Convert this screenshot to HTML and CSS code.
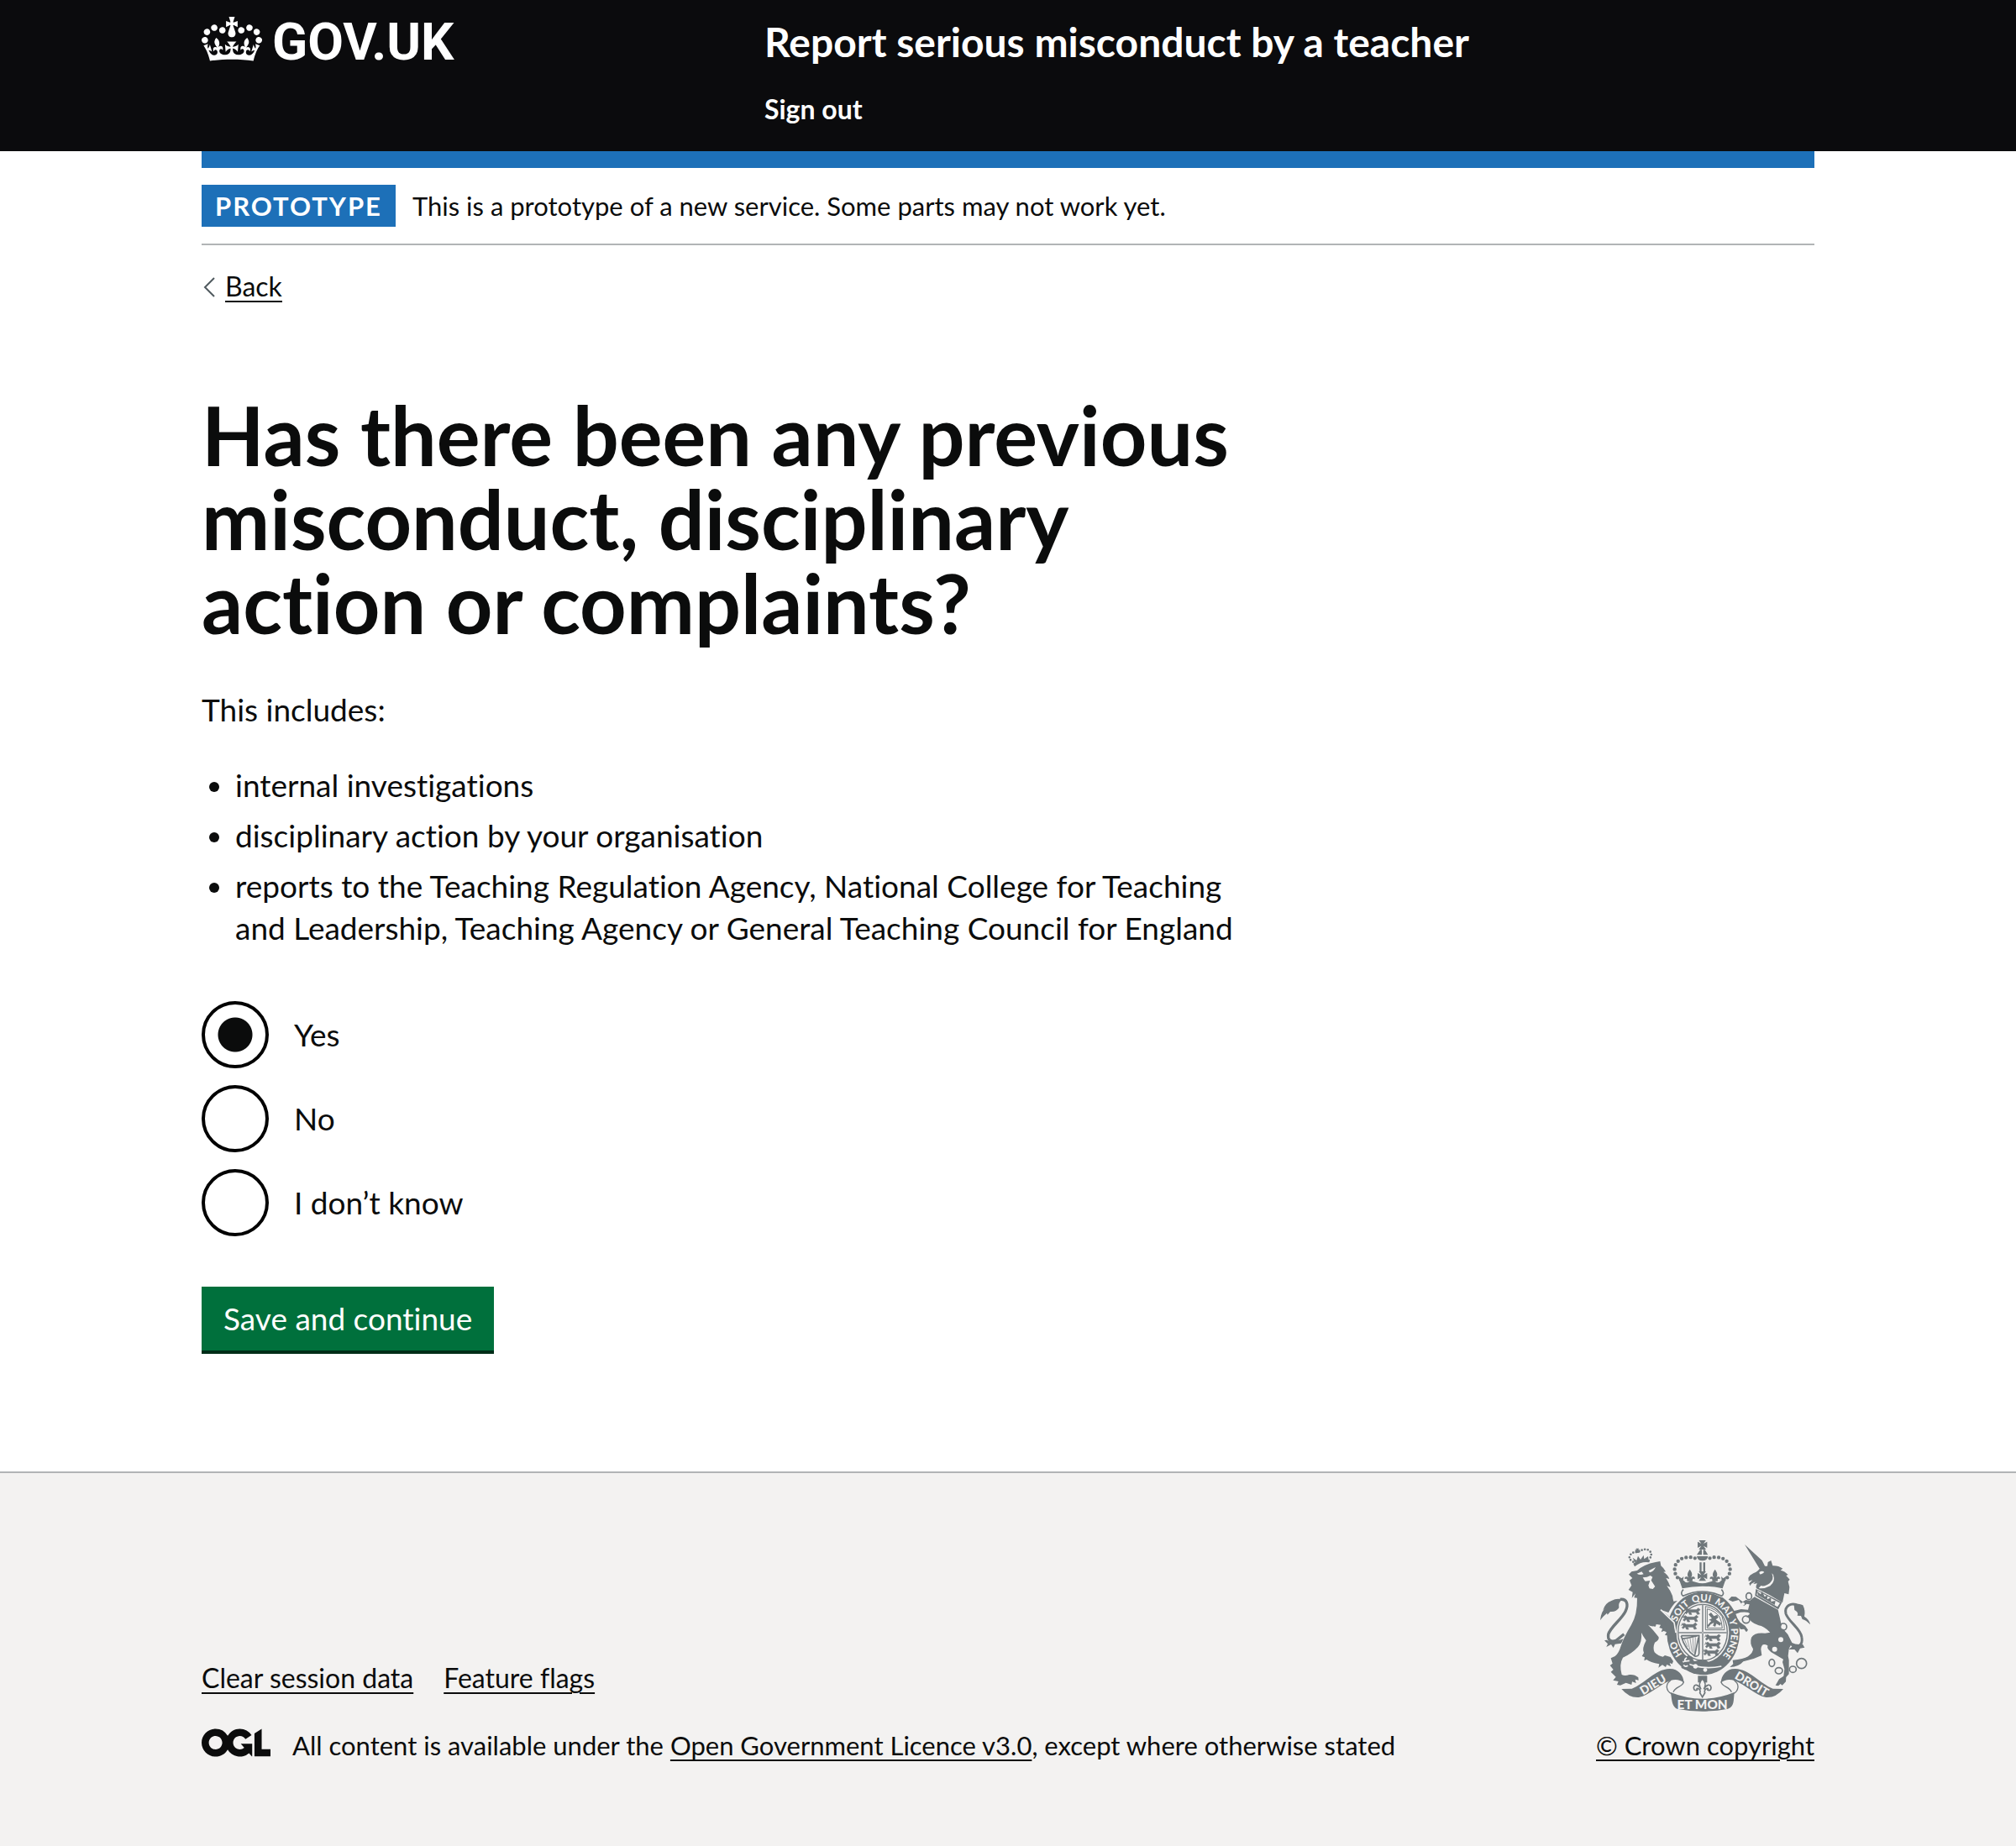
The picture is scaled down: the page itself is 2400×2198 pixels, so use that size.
FILE: index.html
```html
<!DOCTYPE html>
<html lang="en">
<head>
<meta charset="utf-8">
<meta name="viewport" content="width=device-width, initial-scale=1">
<title>Has there been any previous misconduct, disciplinary action or complaints?</title>
<link rel="stylesheet" href="styles.css">
</head>
<body>
<header class="header">
  <div class="container header-grid">
    <a class="logo" href="#">
      <svg viewBox="0 0 132 97" width="72" height="53" aria-hidden="true" fill="currentColor"><path fill-rule="evenodd" d="M25 30.2c3.5 1.5 7.7-.2 9.1-3.7 1.5-3.6-.2-7.8-3.9-9.2-3.6-1.4-7.6.3-9.1 3.9-1.4 3.5.3 7.5 3.9 9zM9 39.5c3.6 1.5 7.8-.2 9.2-3.7 1.5-3.6-.2-7.8-3.9-9.1-3.6-1.5-7.6.2-9.1 3.8-1.4 3.5.3 7.5 3.8 9zM4.4 57.2c3.5 1.5 7.7-.2 9.1-3.8 1.5-3.6-.2-7.7-3.9-9.1-3.5-1.5-7.6.3-9.1 3.8-1.4 3.5.3 7.6 3.9 9.1zm38.3-21.4c3.5 1.5 7.7-.2 9.1-3.8 1.5-3.6-.2-7.7-3.9-9.1-3.6-1.5-7.6.3-9.1 3.8-1.3 3.6.4 7.7 3.9 9.1zm64.4-5.6c-3.6 1.5-7.8-.2-9.1-3.7-1.5-3.6.2-7.8 3.8-9.2 3.6-1.4 7.7.3 9.2 3.9 1.3 3.5-.4 7.5-3.9 9zm15.9 9.3c-3.6 1.5-7.7-.2-9.1-3.7-1.5-3.6.2-7.8 3.7-9.1 3.6-1.5 7.7.2 9.2 3.8 1.5 3.5-.3 7.5-3.8 9zm4.7 17.7c-3.6 1.5-7.8-.2-9.2-3.8-1.5-3.6.2-7.7 3.9-9.1 3.6-1.5 7.7.3 9.2 3.8 1.3 3.5-.4 7.6-3.9 9.1zM89.3 35.8c-3.6 1.5-7.8-.2-9.2-3.8-1.4-3.6.2-7.7 3.9-9.1 3.6-1.5 7.7.3 9.2 3.8 1.4 3.6-.3 7.7-3.9 9.1zM69.7 17.7l8.9 4.7V9.3l-8.9 2.8c-.2-.3-.5-.6-.9-.9L72.4 0H59.6l3.5 11.2c-.3.3-.6.5-.9.9l-8.8-2.8v13.1l8.8-4.7c.3.3.6.7.9.9l-5 15.4v.1c-.2.8-.4 1.6-.4 2.4 0 4.1 3.1 7.5 7 8.1h.2c.3 0 .7.1 1 .1.4 0 .7 0 1-.1h.2c4-.6 7.1-4.1 7.1-8.1 0-.8-.1-1.7-.4-2.4V34l-5.1-15.4c.4-.2.7-.6 1-.9zM66 92.8c16.9 0 32.8 1.1 47.1 3.2 4-16.9 8.9-26.7 14-33.5l-9.6-3.4c1 4.9 1.1 7.2 0 10.2-1.5-1.4-3-4.3-4.2-8.7L108.6 76c2.8-2 5-3.2 7.5-3.3-4.4 9.4-10 11.9-13.6 11.2-4.3-.8-6.3-4.6-5.6-7.9 1-4.7 5.7-5.9 8-.5 4.3-8.7-3-11.4-7.6-8.8 7.1-7.2 7.9-13.5 2.1-21.1-8 6.1-8.1 12.3-4.5 20.8-4.7-5.4-12.1-2.5-9.5 6.2 3.4-5.2 7.9-2 7.2 3.1-.6 4.3-6.4 7.8-13.5 7.2-10.3-.9-10.9-8-11.2-13.8 2.5-.5 7.1 1.8 11 7.3L80.2 60c-4.1 4.4-8 5.3-12.3 5.4 1.4-4.4 8-11.6 8-11.6H55.5s6.4 7.2 7.9 11.6c-4.2-.1-8-1-12.3-5.4l1.4 16.4c3.9-5.5 8.5-7.7 10.9-7.3-.3 5.8-.9 12.8-11.1 13.8-7.2.6-12.9-2.9-13.5-7.2-.7-5 3.8-8.3 7.1-3.1 2.7-8.7-4.6-11.6-9.4-6.2 3.7-8.5 3.6-14.7-4.6-20.8-5.8 7.6-5 13.9 2.2 21.1-4.7-2.6-11.9.1-7.7 8.8 2.3-5.5 7.1-4.2 8.1.5.7 3.3-1.3 7.1-5.7 7.9-3.5.7-9-1.8-13.5-11.2 2.5.1 4.7 1.3 7.5 3.3l-4.7-15.4c-1.2 4.4-2.7 7.2-4.3 8.7-1.1-3-.9-5.3 0-10.2l-9.5 3.4c5 6.9 9.9 16.7 14 33.5 14.8-2.1 30.8-3.2 47.7-3.2z"/></svg>
      <span class="logo-text">GOV.UK</span>
    </a>
    <div class="header-content">
      <a class="service-name" href="#">Report serious misconduct by a teacher</a>
      <nav aria-label="Menu"><a class="sign-out" href="#">Sign out</a></nav>
    </div>
  </div>
</header>

<div class="page">
  <div class="container">
    <div class="blue-bar"></div>
    <div class="phase-banner">
      <strong class="tag">PROTOTYPE</strong>
      <span>This is a prototype of a new service. Some parts may not work yet.</span>
    </div>
    <a class="back-link" href="#"><svg viewBox="0 0 14 24" width="14" height="24" aria-hidden="true"><path d="M13 1 2 12l11 11" fill="none" stroke="#505a5f" stroke-width="2"/></svg><span class="back-text">Back</span></a>

    <main class="main">
      <form class="column" action="#">
        <h1 class="heading" id="question">Has there been any previous misconduct, disciplinary action or complaints?</h1>
        <p class="body-text">This includes:</p>
        <ul class="list">
          <li>internal investigations</li>
          <li>disciplinary action by your organisation</li>
          <li>reports to the Teaching Regulation Agency, National College for Teaching and Leadership, Teaching Agency or General Teaching Council for England</li>
        </ul>
        <div class="radios" role="radiogroup" aria-labelledby="question">
          <div class="radio-item"><input class="radio" type="radio" name="previous" id="previous-yes" value="yes" checked><label for="previous-yes">Yes</label></div>
          <div class="radio-item"><input class="radio" type="radio" name="previous" id="previous-no" value="no"><label for="previous-no">No</label></div>
          <div class="radio-item"><input class="radio" type="radio" name="previous" id="previous-unknown" value="unknown"><label for="previous-unknown">I don’t know</label></div>
        </div>
        <button class="button" type="submit">Save and continue</button>
      </form>
    </main>
  </div>
</div>

<footer class="footer">
  <div class="container footer-grid">
    <div class="footer-meta">
      <ul class="footer-links">
        <li><a class="link" href="#">Clear session data</a></li>
        <li><a class="link" href="#">Feature flags</a></li>
      </ul>
      <div class="licence">
        <svg viewBox="0 0 483.2 195.7" width="82" height="34" aria-hidden="true" fill="currentColor"><path d="M421.5 142.8V.1l-50.7 32.3v161.1h112.4v-50.7zm-122.3-9.6A47.12 47.12 0 0 1 221 97.8c0-26 21.1-47.1 47.1-47.1 16.7 0 31.4 8.7 39.7 21.8l42.7-27.2A97.63 97.63 0 0 0 268.1 0c-36.5 0-68.3 20.1-85.1 49.7A98 98 0 0 0 97.8 0C43.9 0 0 43.9 0 97.8s43.9 97.8 97.8 97.8c36.5 0 68.3-20.1 85.1-49.7a97.76 97.76 0 0 0 149.6 25.4l19.4 22.2h3v-87.8h-80l24.3 27.5zM97.8 145c-26 0-47.1-21.1-47.1-47.1s21.1-47.1 47.1-47.1 47.1 21.1 47.1 47.1S123.8 145 97.8 145"/></svg>
        <span>All content is available under the <a class="link" href="#">Open Government Licence v3.0</a>, except where otherwise stated</span>
      </div>
    </div>
    <a class="copyright" href="#">
      <svg class="arms" viewBox="72 72 750 612" width="250" height="204" aria-hidden="true">
        <defs>
          <path id="garter" d="M440 517A100 114 0 0 1 440 289A100 114 0 0 1 440 517"/>
          <g id="fleur"><path d="M0-22C-11-8-9 0-4 8C-12 0-20 4-18 13C-12 9-8 12-10 20H10C8 12 12 9 18 13C20 4 12 0 4 8C9 0 11-8 0-22Z"/></g>
          <path id="patee" d="M-13-17H13L4-4L17-11V11L4 4L13 17H-13L-4 4L-17 11V-11L-4-4Z"/>
          <path id="beast" d="M-30-8L-22-13L-15-8H10L18-14L24-8L17-2L22 7L14 9L10 1H-10L-6 9L-14 9L-18 0L-26 7L-30 2L-24-3ZM-28-14L-33-3"/>
        </defs>
        <!-- lion -->
        <path d="M174 194L184 184L204 180Q228 158 270 150L286 147L289 163Q298 170 306 184L298 185Q314 195 319 210L307 207Q318 224 323 239L310 235Q322 250 330 270Q332 284 334 290L348 288Q330 302 316 330L292 322L337 361Q340 385 350 427Q332 424 330 431L321 422L314 424L314 412L303 411L309 400L299 396L290 400L294 388L283 384L288 374L272 372Q270 386 264 379Q252 380 243 374Q262 392 281 418Q283 430 267 437Q259 455 266 472Q280 487 296 488L303 483L323 489L333 504L329 514L320 510L325 523L310 516L306 525L294 517L280 527L283 514Q250 508 238 498L229 502L231 490L221 486L228 474Q220 460 236 430Q225 415 219 402Q222 435 207 453Q185 477 153 491Q139 515 149 552Q160 558 176 552Q195 550 208 562L209 572L197 569L200 582L186 577L184 588L164 581L144 590L132 588L137 576L118 572L128 560L110 542L119 534L107 519L116 512L110 493L125 486Q139 474 145 452Q155 420 183 374Q205 337 204 278L193 277L198 262L185 278L188 257L173 249L184 233L177 215L187 207Z"/>
        <path class="light" d="M203 191L220 184L227 193Q213 198 203 191ZM245 181L270 168Q263 184 249 187ZM224 205L239 203L251 198L259 203L254 215L268 237L260 246L248 244L244 233L250 216L233 218Q228 213 224 205Z"/>
        <path d="M190 155Q217 136 250 142L247 151Q219 146 195 166Z"/>
        <path class="line bead small-bead" d="M190 149Q172 140 178 126Q189 111 207 115Q231 97 248 109Q260 122 249 137"/>
        <path d="M195 150L188 134L202 144L207 128L216 141L227 125L229 139L243 129L245 142Z"/>
        <use href="#patee" transform="translate(205 109) scale(.45)"/>
        <path d="M72 358Q75 325 91 314L82 322Q89 296 112 288Q133 277 151 284Q135 294 139 313Q130 329 108 327L98 338L96 332Q80 345 72 358Z"/>
        <path class="line" stroke-width="10" d="M143 283C168 280 174 302 162 326C148 355 108 382 101 408C98 427 109 438 129 430L157 407"/>
        <path d="M95 428Q112 440 155 424L147 440L125 443L119 456L111 444L94 453L99 442L87 430Z"/>
        <!-- unicorn -->
        <path d="M588 87L650 144L661 166L641 173ZM641 174L656 164L669 164L671 150L682 144L688 163Q708 162 724 173L716 179Q731 182 743 195L736 198L749 212L743 219L748 239L745 265L730 261L723 295Q680 267 630 244Q626 237 633 226L619 228L626 220L612 227L607 235L604 226L616 214L602 218L601 206L607 197Q620 188 629 185Q636 181 641 174Z"/>
        <path class="light" d="M640 186Q651 179 658 186Q649 195 642 193ZM685 190Q694 211 678 225Q659 239 646 234L638 243Q657 247 679 235Q699 218 690 195Z"/>
        <path d="M628 246L721 294L708 319L625 270ZM634 252L631 267L705 310L714 296Z" fill-rule="evenodd"/>
        <path d="M635 268L633 254L645 265L650 254L659 273L670 269L668 283L682 277L682 291L698 288L695 303Z"/>
        <path d="M623 274L707 320L714 350Q719 386 742 408L757 438L746 460L743 485L746 500V550L736 561L735 577L722 590L716 585L708 592L698 590L711 568L727 557L730 532L723 507L726 497L693 478Q665 463 670 448Q648 436 646 461L649 483Q617 499 583 505Q568 524 535 525L547 514L545 500Q584 497 600 487Q619 472 618 460Q605 440 612 419Q623 400 661 404L679 401Q656 378 638 376Q606 364 605 350L592 347L606 335Q604 326 573 329L552 337L572 365L590 378L600 392L594 400L586 389L574 390L554 366L560 361L543 338L548 325L575 318L600 320L605 301L595 299L585 307L574 296L567 285L545 291L530 284L541 273L557 274L581 292L592 285L607 287Z"/>
        <path d="M764 303Q780 295 796 304Q806 325 801 344Q819 355 822 373Q807 357 794 354L789 342L776 341Q782 329 766 321Z"/>
        <path class="line" stroke-width="9" d="M782 306C752 290 729 309 735 334C744 363 790 389 792 419C796 448 780 456 755 444L723 396"/>
        <path d="M738 421Q757 449 795 443L802 455L786 458L777 475L766 462L744 462L757 452Z"/>
        <g class="line" stroke-width="5"><ellipse cx="603" cy="272" rx="10" ry="12"/><circle cx="593" cy="355" r="13"/><circle cx="726" cy="381" r="12"/><ellipse cx="685" cy="510" rx="10" ry="13"/><ellipse cx="710" cy="538" rx="13" ry="11"/><ellipse cx="760" cy="533" rx="12" ry="11"/><circle cx="791" cy="512" r="18"/></g>
        <g class="light"><circle cx="593" cy="355" r="9"/><circle cx="582" cy="299" r="6"/><circle cx="726" cy="381" r="8"/><circle cx="717" cy="427" r="9"/><circle cx="695" cy="461" r="9"/></g>
        <!-- garter and shield -->
        <ellipse cx="440" cy="403" rx="130" ry="150"/>
        <ellipse class="light" cx="438" cy="402" rx="94" ry="107"/>
        <ellipse class="line" cx="438" cy="401" rx="88" ry="100" stroke-width="4"/>
        <path class="light-line" stroke-width="5" d="M288 320L336 366L342 402"/>
        <path d="M300 342L333 369L342 424L314 420Z"/>
        <g class="motto" font-size="34">
          <text><textPath href="#garter" startOffset="86">HO</textPath></text>
          <text><textPath href="#garter" startOffset="208">SOIT</textPath></text>
          <text><textPath href="#garter" startOffset="298">QUI</textPath></text>
          <text><textPath href="#garter" startOffset="376">MAL</textPath></text>
          <text><textPath href="#garter" startOffset="457">Y</textPath></text>
          <text><textPath href="#garter" startOffset="488">PENSE</textPath></text>
        </g>
        <path class="line" stroke-width="6" d="M438 302V500M350 402H526"/>
        <path class="light-line" stroke-width="2" d="M438 302V500M350 402H526"/>
        <g class="detail"><use href="#beast" x="405" y="328"/><use href="#beast" x="398" y="354"/><use href="#beast" x="394" y="381"/><use href="#beast" x="478" y="422"/><use href="#beast" x="478" y="449"/><use href="#beast" x="472" y="475"/></g>
        <path class="line" stroke-width="3" d="M448 308V392H516Q515 365 507 344Q486 316 448 308M454 317V386H508Q506 360 498 345Q482 324 454 317"/>
        <path d="M459 337L468 330L478 343L490 338L494 348L485 355L504 368L500 377L487 370L483 381L475 377L478 366L466 373L458 383L455 376L469 360L460 356L471 351Z"/>
        <path class="line" stroke-width="5" d="M361 413L425 412V475Q425 488 410 486Q374 461 361 413M363 424Q389 421 417 414M410 482L423 419"/>
        <path class="line" stroke-width="2" d="M373 426L384 453M383 424L392 463M393 422L400 470M403 420L405 475M412 418L410 477"/>
        <path d="M430 499L448 499L462 509L490 503Q450 525 407 505Z"/>
        <path class="light-line" stroke-width="5" d="M367 505Q430 537 505 522"/>
        <path d="M374 493L385 484L399 488L406 502L390 508L393 528L376 535L362 528L362 515L371 509Z"/>
        <path class="light-line" stroke-width="5" d="M381 491Q373 495 374 504L391 502M370 517Q375 526 385 520"/>
        <circle class="light" cx="412" cy="522" r="8"/><circle class="light" cx="447" cy="535" r="7"/>
        <!-- crown -->
        <path class="light" stroke="#f3f2f1" stroke-width="8" d="M366 248Q437 230 508 248L514 262L505 271Q437 236 370 271L362 264Z"/>
        <path class="line" stroke-width="5" d="M369 248Q356 261 368 271Q437 239 506 271Q518 261 505 248"/>
        <path d="M354 212L371 216Q380 230 394 216L415 222Q437 230 458 222L480 216Q492 230 504 216L520 212L509 244Q437 228 365 244Z"/>
        <use href="#fleur" x="392" y="198"/><use href="#fleur" x="482" y="198"/>
        <use href="#patee" transform="translate(437 200)"/><use href="#patee" transform="translate(437 88)"/>
        <path d="M354 217L352 201L363 208L370 201L368 217ZM520 217L522 201L511 208L504 201L506 217Z"/>
        <path class="line bead" d="M348 205C326 176 341 136 382 133Q403 130 420 141"/>
        <path class="line bead" d="M526 205C548 176 533 136 492 133Q471 130 454 141"/>
        <path d="M429 106H435V124H417ZM440 106H446L457 124H440ZM417 129H457Q455 145 437 145Q419 145 417 129ZM427 151H434V183H427ZM440 151H447V183H440Z"/>
        <!-- scroll -->
        <path d="M148 603L185 602C228 586 270 532 319 531C350 530 370 554 371 581Q350 564 321 574C286 586 247 627 210 633Q176 636 148 603Z"/>
        <path d="M726 603L689 602C646 586 604 532 555 531C524 530 504 554 503 581Q524 564 553 574C588 586 627 627 664 633Q698 636 726 603Z"/>
        <path class="line" stroke-width="4" d="M323 573C304 586 306 610 328 621M370 576C370 596 340 593 333 614M551 573C570 586 568 610 546 621M504 576C504 596 534 593 541 614"/>
        <path d="M323 615Q437 661 551 615C548 650 550 666 528 674Q437 692 346 674C325 664 329 636 323 615Z"/>
        <g class="motto middle">
          <text font-size="46" transform="translate(437 676)">ET MON</text>
          <text font-size="42" transform="translate(268 600) rotate(-31)">DIEU</text>
          <text font-size="42" transform="translate(606 598) rotate(31)">DROIT</text>
        </g>
        <path d="M421 556H454V580H421Z"/>
        <path class="light" stroke="#6f777b" stroke-width="5" d="M437 567C424 580 424 590 432 604C424 588 407 582 406 599Q407 611 418 607Q415 598 423 602Q432 607 428 617L437 632L446 617Q442 607 451 602Q459 598 456 607Q467 611 468 599C467 582 450 588 442 604C450 590 450 580 437 567Z"/>
      </svg>
      <span class="link">© Crown copyright</span>
    </a>
  </div>
</footer>
</body>
</html>
```
FILE: styles.css
```css
* { box-sizing: border-box; }

body {
  margin: 0;
  background: #f3f2f1;
  color: #0b0c0c;
  font-family: Lato, "Liberation Sans", sans-serif;
  font-size: 31px;
  line-height: 40px;
  font-variant-ligatures: none;
}

a { color: inherit; }

.container { width: 80%; margin: 0 auto; }

/* Header */
.header { background: #0b0b0d; color: #fff; }
.header a { text-decoration: none; }
.header-grid { display: grid; grid-template-columns: 670px 1fr; padding: 20px 0 30px; }
.logo { display: flex; align-items: flex-start; align-self: start; gap: 12px; }
.logo-text { font-family: Roboto, sans-serif; font-weight: 700; font-size: 62px; line-height: 60px; }
.header-content { display: flex; flex-direction: column; gap: 30px; }
.service-name { font-weight: 700; font-size: 48px; line-height: 60px; }
.sign-out { font-weight: 700; font-size: 32px; }

/* Page */
.page { background: #fff; }
.blue-bar { height: 20px; background: #1d70b8; }
.phase-banner { display: flex; align-items: center; gap: 20px; padding: 20px 0; border-bottom: 2px solid #b1b4b6; }
.tag { background: #1d70b8; color: #fff; padding: 5px 16px; letter-spacing: 2px; }
.back-link { display: inline-flex; align-items: center; gap: 12px; margin-top: 32px; padding-left: 2px; font-size: 32px; text-decoration: none; }
.back-text { border-bottom: 2px solid; line-height: 34px; }
.main { padding: 106px 0 144px; }
.column { max-width: 1260px; }
.heading { margin: 0 0 52px; font-size: 97px; line-height: 100px; }
.body-text, .list { margin: 0 0 40px; font-size: 37px; line-height: 50px; }
.list { padding-left: 40px; display: grid; gap: 10px; }
.radios { display: grid; gap: 20px; margin: 62px 0 60px; font-size: 37px; }
.radio-item { display: flex; align-items: center; gap: 30px; }
.radio { appearance: none; width: 80px; height: 80px; margin: 0; border: 4px solid; border-radius: 50%; }
.radio:checked { background: radial-gradient(circle, #0b0c0c 20px, transparent 21px); }
.button { display: block; border: 0; padding: 13px 26px; background: #00703c; color: #fff; font: inherit; font-size: 37px; line-height: 50px; box-shadow: 0 4px 0 #002d18; }

/* Footer */
.footer { border-top: 2px solid #b1b4b6; padding: 80px 0; }
.footer-grid { display: flex; justify-content: space-between; align-items: flex-end; }
.footer-links { display: flex; gap: 36px; list-style: none; margin: 0 0 40px; padding: 0; font-size: 32px; }
.licence { display: flex; gap: 26px; }
.copyright { display: grid; justify-items: center; gap: 20px; text-decoration: none; }
.link { text-decoration: underline; text-decoration-thickness: 2px; text-underline-offset: 5px; }

/* Royal arms */
.arms { fill: #6f777b; }
.arms .light { fill: #f3f2f1; }
.arms .line { fill: none; stroke: #6f777b; }
.arms .light-line { fill: none; stroke: #f3f2f1; }
.arms .bead { stroke-width: 13px; stroke-linecap: round; stroke-dasharray: 0 16; }
.arms .small-bead { stroke-width: 8px; stroke-dasharray: 0 11; }
.arms .detail { stroke: #6f777b; stroke-width: 2px; }
.arms .motto { fill: #f3f2f1; font-weight: 900; }
.arms .middle { text-anchor: middle; }
```
